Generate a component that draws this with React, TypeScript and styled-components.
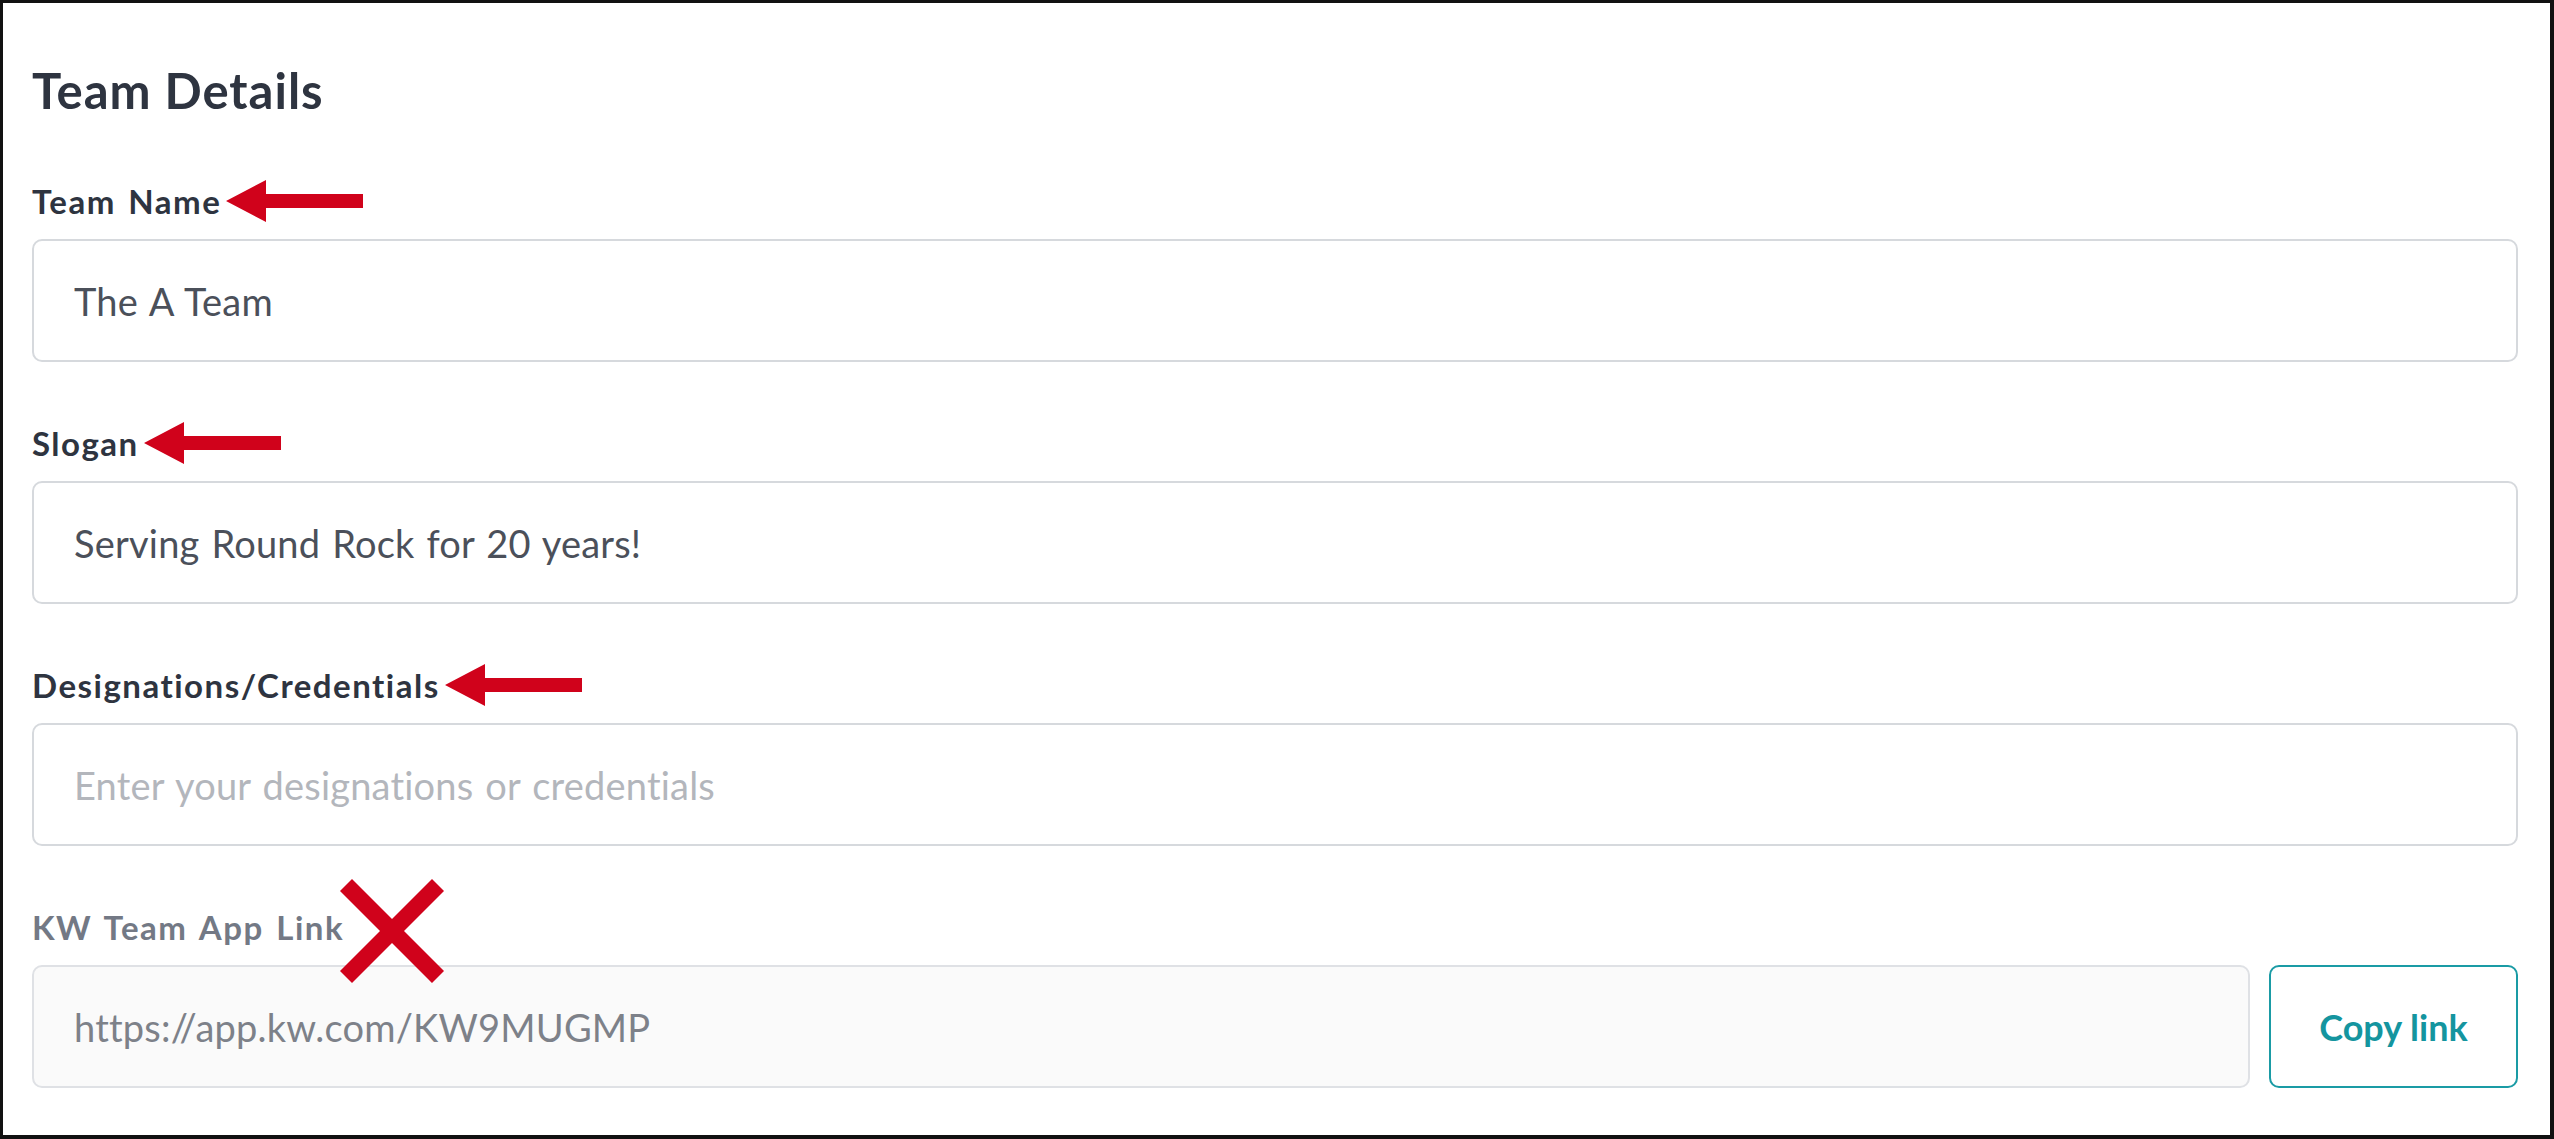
import styled, { createGlobalStyle } from "styled-components";

const GlobalStyle = createGlobalStyle`
  html, body {
    margin: 0;
    padding: 0;
    background: #ffffff;
    font-family: Lato, "Liberation Sans", sans-serif;
  }
`;

const Frame = styled.div`
  box-sizing: border-box;
  width: 2554px;
  height: 1139px;
  border-style: solid;
  border-color: #111111;
  border-width: 3px 4px 4px 3px;
  padding: 57px 32px 0 29px;
  background: #ffffff;
`;

const Title = styled.h2`
  margin: 0 0 61px;
  font: 700 49px/60px Lato, "Liberation Sans", sans-serif;
  letter-spacing: 1px;
  color: #2e3440;
`;

const Form = styled.form`
  display: flex;
  flex-direction: column;
  gap: 61px;
`;

const Field = styled.div`
  display: flex;
  flex-direction: column;
  gap: 18px;
`;

const LabelRow = styled.div`
  display: flex;
  align-items: center;
  height: 40px;
`;

const Label = styled.label<{ $muted?: boolean }>`
  font: 700 33px/40px Lato, "Liberation Sans", sans-serif;
  letter-spacing: 1.5px;
  word-spacing: 3px;
  color: ${(p) => (p.$muted ? "#737985" : "#2e3440")};
  white-space: nowrap;
`;

const ArrowMark = styled.svg`
  flex-shrink: 0;
  margin-left: 5px;
  overflow: visible;
`;

const CrossHolder = styled.span`
  position: relative;
  width: 0;
  height: 40px;
`;

const CrossMark = styled.svg`
  position: absolute;
  left: -4px;
  top: -28px;
`;

const TextInput = styled.input`
  box-sizing: border-box;
  width: 100%;
  height: 123px;
  padding: 0 40px;
  border: 2px solid #d6d9dd;
  border-radius: 10px;
  background: #ffffff;
  font: 400 38px Lato, "Liberation Sans", sans-serif;
  letter-spacing: 0.2px;
  word-spacing: 2px;
  color: #4b505a;
  outline: none;

  &::placeholder {
    color: #b3b6bc;
  }

  &:read-only {
    background: #fafafa;
    border-color: #dfe1e5;
    color: #7d8189;
  }
`;

const LinkRow = styled.div`
  display: flex;
  gap: 19px;
`;

const CopyButton = styled.button`
  flex-shrink: 0;
  box-sizing: border-box;
  width: 249px;
  height: 123px;
  border: 2px solid #1a9ba5;
  border-radius: 10px;
  background: #ffffff;
  color: #14959f;
  font: 700 36px Lato, "Liberation Sans", sans-serif;
  cursor: pointer;
`;

const Arrow = () => (
  <ArrowMark width="137" height="42" viewBox="0 0 137 42">
    <polygon
      points="0,21 40,0 40,14 137,14 137,28 40,28 40,42"
      fill="#d0021b"
    />
  </ArrowMark>
);

const Cross = () => (
  <CrossHolder>
    <CrossMark width="104" height="104" viewBox="0 0 104 104">
      <g stroke="#d0021b" strokeWidth="17" strokeLinecap="butt">
        <line x1="6" y1="6" x2="98" y2="98" />
        <line x1="98" y1="6" x2="6" y2="98" />
      </g>
    </CrossMark>
  </CrossHolder>
);

export default function App() {
  return (
    <>
      <GlobalStyle />
      <Frame>
        <Title>Team Details</Title>
        <Form onSubmit={(e) => e.preventDefault()}>
          <Field>
            <LabelRow>
              <Label htmlFor="teamName">Team Name</Label>
              <Arrow />
            </LabelRow>
            <TextInput id="teamName" defaultValue="The A Team" />
          </Field>

          <Field>
            <LabelRow>
              <Label htmlFor="slogan">Slogan</Label>
              <Arrow />
            </LabelRow>
            <TextInput id="slogan" defaultValue="Serving Round Rock for 20 years!" />
          </Field>

          <Field>
            <LabelRow>
              <Label htmlFor="credentials">Designations/Credentials</Label>
              <Arrow />
            </LabelRow>
            <TextInput
              id="credentials"
              placeholder="Enter your designations or credentials"
            />
          </Field>

          <Field>
            <LabelRow>
              <Label $muted htmlFor="appLink">KW Team App Link</Label>
              <Cross />
            </LabelRow>
            <LinkRow>
              <TextInput id="appLink" readOnly value="https://app.kw.com/KW9MUGMP" />
              <CopyButton type="button">Copy link</CopyButton>
            </LinkRow>
          </Field>
        </Form>
      </Frame>
    </>
  );
}
